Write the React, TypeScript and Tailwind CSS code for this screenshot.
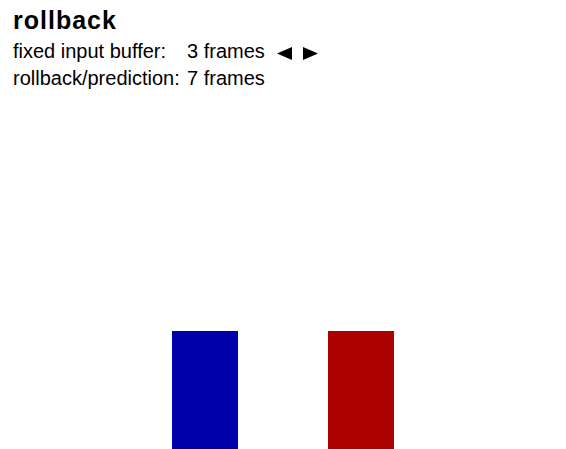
import React from "react";

function Arrow({ dir }: { dir: "left" | "right" }) {
  return (
    <svg width="15" height="13" viewBox="0 0 15 13" className="block">
      {dir === "left" ? (
        <polygon points="0,6.5 15,0 15,13" fill="#000" />
      ) : (
        <polygon points="15,6.5 0,0 0,13" fill="#000" />
      )}
    </svg>
  );
}

export default function App() {
  const rows = [
    { label: "fixed input buffer:", value: "3 frames", adjustable: true },
    { label: "rollback/prediction:", value: "7 frames", adjustable: false },
  ];

  return (
    <div
      className="h-screen overflow-hidden flex flex-col bg-white text-black"
      style={{ fontFamily: '"Liberation Sans", Arial, sans-serif' }}
    >
      <div className="pl-[13px] pt-[6px]">
        <h1 className="text-[25px] leading-[28px] font-bold tracking-[1px]">rollback</h1>
        <div className="mt-[4px] text-[20px] leading-[27px]">
          {rows.map((r) => (
            <div key={r.label} className="flex items-center">
              <span className="w-[174px] shrink-0 whitespace-nowrap">{r.label}</span>
              <span className="whitespace-nowrap">{r.value}</span>
              {r.adjustable && (
                <span className="ml-[12px] flex items-center gap-[11px] pt-[3px]">
                  <Arrow dir="left" />
                  <Arrow dir="right" />
                </span>
              )}
            </div>
          ))}
        </div>
      </div>

      {/* play field: two player blocks standing on the floor */}
      <div className="flex-1 flex items-end pl-[172px] gap-[90px]">
        <div className="w-[66px] h-[118px] bg-[#0000aa]" />
        <div className="w-[66px] h-[118px] bg-[#aa0000]" />
      </div>
    </div>
  );
}
